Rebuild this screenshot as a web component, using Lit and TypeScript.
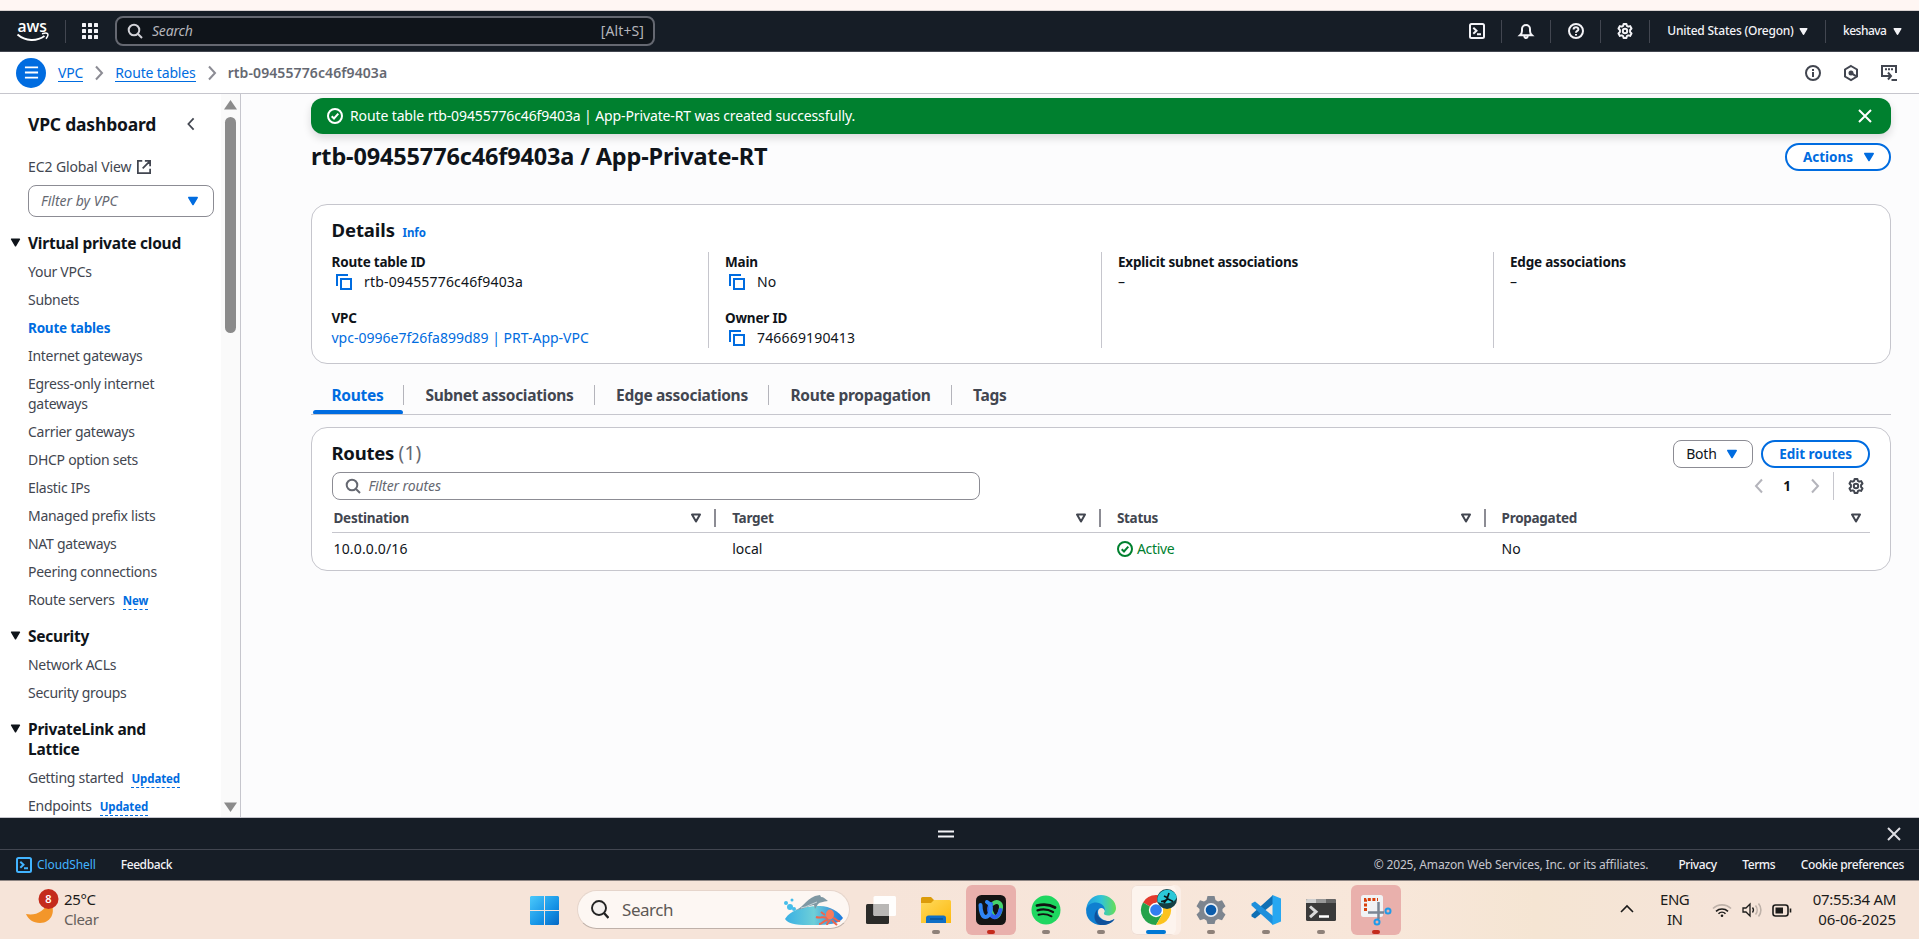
import { LitElement, html, css, svg, nothing } from 'lit';
import { customElement, property } from 'lit/decorators.js';
import { classMap } from 'lit/directives/class-map.js';

type IconName =
  | 'search' | 'shell' | 'bell' | 'help' | 'gear' | 'info' | 'hexagon' | 'shellOpen' | 'external'
  | 'copy' | 'check' | 'close' | 'left' | 'right' | 'down' | 'sort' | 'grid' | 'menu' | 'handle';

const gearPath = 'M6.6 1h2.8l.5 1.9 1.3.75 1.9-.55 1.4 2.4L13.1 7v2l1.4 1.5-1.4 2.4-1.9-.55-1.3.75L9.4 15H6.6l-.5-1.9-1.3-.75-1.9.55-1.4-2.4L2.9 9V7L1.5 5.5l1.4-2.4 1.9.55 1.3-.75z';

const glyphs: Record<IconName, unknown> = {
  search: svg`<circle cx="7" cy="7" r="5.3"/><path d="m11 11 4 4"/>`,
  shell: svg`<rect x="1" y="1" width="14" height="14" rx="1.5"/><path d="m4.3 4.8 3.2 3-3.2 3M8 11.2h4"/>`,
  bell: svg`<path d="M2 12.3h12c-1.3-1.2-2-2.6-2-4.3V6a4 4 0 0 0-8 0v2c0 1.700-.7 3.100-2 4.300zM6.300 12.500c0 3.300 3.400 3.300 3.400 0"/>`,
  help: svg`<circle cx="8" cy="8" r="7"/><path d="M5.600 6.400c0-3 4.800-3 4.800 0 0 1.600-2.400 1.500-2.400 3.300M8 11v1.600"/>`,
  gear: svg`<path d=${gearPath} stroke-linejoin="round"/><circle cx="8" cy="8" r="2.200"/>`,
  info: svg`<circle cx="8" cy="8" r="7"/><path d="M8 4v2M8 7v5"/>`,
  hexagon: svg`<path d="m8 1 6 3.500v7L8 15l-6-3.500v-7z"/><path d="m8.500 8.300 4.500 2.800"/><circle cx="8" cy="8" r="1.500" fill="currentColor"/>`,
  shellOpen: svg`<path d="M15 8V1H1v10h4"/><path d="M4 4.300h8" stroke-dasharray="2 1"/><path d="M4.500 11h5M7 7.500l3 3.500-3 3.500M10.500 15H16"/>`,
  external: svg`<path d="M6 1H1v14h14v-5M9 1h6v6M15 1 6.500 9.500"/>`,
  copy: svg`<path d="M1 12V1h11M5 5h10v10H5z"/>`,
  check: svg`<circle cx="8" cy="8" r="7"/><path d="m4.700 8.200 2.300 2.300 4.300-4.800"/>`,
  close: svg`<path d="m2 2 12 12M14 2 2 14"/>`,
  left: svg`<path d="m11 1.500-6 6.500 6 6.500"/>`,
  right: svg`<path d="m5 1.500 6 6.500-6 6.500"/>`,
  down: svg`<path d="M3.800 4.500h8.400L8 11.500z" fill="currentColor" stroke-linejoin="round" stroke-width="1.500"/>`,
  sort: svg`<path d="M4 4.500h8L8 11.500z" stroke-linejoin="round"/>`,
  grid: svg`${[0, 6, 12].map((y) => [0, 6, 12].map((x) => svg`<rect x=${x} y=${y} width="4" height="4" rx=".6" fill="currentColor" stroke="none"/>`))}`,
  menu: svg`<path d="M1 2.500h14M1 8h14M1 13.500h14"/>`,
  handle: svg`<path d="M0 5.500h16M0 10.500h16"/>`,
};

@customElement('ui-icon')
export class UiIcon extends LitElement {
  @property() name: IconName = 'search';
  static styles = css`
    :host { display: inline-flex; flex: none; width: 16px; height: 16px; }
    svg { width: 100%; height: 100%; fill: none; stroke: currentColor; stroke-width: 2; overflow: visible; }
  `;
  render() {
    return html`<svg viewBox="0 0 16 16">${glyphs[this.name]}</svg>`;
  }
}

@customElement('aws-top-nav')
export class AwsTopNav extends LitElement {
  static styles = css`
    :host { display: flex; align-items: center; box-sizing: border-box; height: 41px; background: #161d26; border-bottom: 1px solid #424650; color: #f3f3f7; font-size: 12px; }
    .logo { width: 33px; height: 22px; margin-left: 16px; overflow: visible; }
    .logo text { font: 600 17px 'Open Sans', sans-serif; fill: #fff; }
    .rule { width: 1px; height: 23px; background: #424650; flex: none; }
    .logo + .rule { margin: 0 16px; }
    .search { display: flex; align-items: center; box-sizing: border-box; width: 540px; height: 30px; margin-left: 17px; padding: 0 9px 0 10px; border: 2px solid #656871; border-radius: 8px; background: #0f141a; color: #b4b4bb; font-size: 14px; }
    .search ui-icon { color: #d2d2d8; margin-right: 9px; }
    .search em { flex: 1; letter-spacing: -.2px; }
    .search span { letter-spacing: .1px; }
    .tools { display: flex; align-items: center; margin-left: auto; gap: 16.200px; }
    .menu { display: flex; align-items: center; gap: 3px; font-weight: 500; letter-spacing: -.22px; white-space: nowrap; }
    .menu ui-icon { width: 13px; height: 13px; }
    .region { margin-left: 1px; margin-right: -1px; }
    .user { gap: 4px; margin: 0 15.500px 0 1px; letter-spacing: -.5px; }
  `;
  render() {
    return html`
      <svg class="logo" viewBox="0 0 33 22">
        <text x="1.500" y="11.500" textLength="29.500" lengthAdjust="spacingAndGlyphs">aws</text>
        <path d="M1.500 14.500c8 7 19.500 7 27 1.500" fill="none" stroke="#fff" stroke-width="1.900"/>
        <path d="M26 13.700c2.500-.7 5-.7 5.600 0s-.3 3.300-1.600 5" fill="none" stroke="#fff" stroke-width="1.500"/>
      </svg>
      <i class="rule"></i>
      <ui-icon name="grid"></ui-icon>
      <div class="search"><ui-icon name="search"></ui-icon><em>Search</em><span>[Alt+S]</span></div>
      <div class="tools">
        <ui-icon name="shell"></ui-icon><i class="rule"></i>
        <ui-icon name="bell"></ui-icon><i class="rule"></i>
        <ui-icon name="help"></ui-icon><i class="rule"></i>
        <ui-icon name="gear"></ui-icon><i class="rule"></i>
        <span class="menu region">United States (Oregon) <ui-icon name="down"></ui-icon></span><i class="rule"></i>
        <span class="menu user">keshava <ui-icon name="down"></ui-icon></span>
      </div>`;
  }
}

@customElement('aws-breadcrumbs')
export class AwsBreadcrumbs extends LitElement {
  static styles = css`
    :host { display: flex; align-items: center; box-sizing: border-box; height: 42px; padding: 0 22px 0 16px; background: #fff; border-bottom: 1px solid #c6c6cd; }
    .toggle { display: flex; align-items: center; justify-content: center; width: 30px; height: 30px; border-radius: 50%; background: #006ce0; color: #fff; margin-right: 12px; }
    .toggle ui-icon { width: 15px; height: 15px; }
    a { color: #006ce0; line-height: 17px; border-bottom: 1px solid #006ce0; padding-top: 1px; letter-spacing: -.15px; }
    .sep { width: 16px; height: 16px; margin: 0 8px; color: #8c8c94; }
    b { font-weight: 600; color: #656871; letter-spacing: .1px; flex: 1; }
    .tools { display: flex; gap: 22px; color: #424650; }
  `;
  render() {
    return html`
      <span class="toggle"><ui-icon name="menu"></ui-icon></span>
      <a>VPC</a><ui-icon class="sep" name="right"></ui-icon>
      <a>Route tables</a><ui-icon class="sep" name="right"></ui-icon>
      <b>rtb-09455776c46f9403a</b>
      <div class="tools"><ui-icon name="info"></ui-icon><ui-icon name="hexagon"></ui-icon><ui-icon name="shellOpen"></ui-icon></div>`;
  }
}

interface NavLink { label: string; tag?: string; current?: boolean }
const sections: { title: string; links: NavLink[] }[] = [
  {
    title: 'Virtual private cloud',
    links: [
      { label: 'Your VPCs' }, { label: 'Subnets' }, { label: 'Route tables', current: true }, { label: 'Internet gateways' },
      { label: 'Egress-only internet gateways' }, { label: 'Carrier gateways' }, { label: 'DHCP option sets' }, { label: 'Elastic IPs' },
      { label: 'Managed prefix lists' }, { label: 'NAT gateways' }, { label: 'Peering connections' }, { label: 'Route servers', tag: 'New' },
    ],
  },
  { title: 'Security', links: [{ label: 'Network ACLs' }, { label: 'Security groups' }] },
  { title: 'PrivateLink and Lattice', links: [{ label: 'Getting started', tag: 'Updated' }, { label: 'Endpoints', tag: 'Updated' }] },
];

@customElement('vpc-sidebar')
export class VpcSidebar extends LitElement {
  static styles = css`
    :host { display: flex; box-sizing: border-box; width: 241px; height: 723px; overflow: hidden; background: #fff; border-right: 1px solid #c6c6cd; color: #424650; }
    .body { flex: 1; min-width: 0; overflow: hidden; padding: 18px 7px 0 28px; }
    .head { display: flex; align-items: center; justify-content: space-between; height: 24px; padding-right: 15px; }
    h2 { margin: 0; font-size: 17.500px; font-weight: 700; letter-spacing: -.2px; color: #0f141a; }
    .head ui-icon { width: 16px; height: 14px; }
    .global { display: flex; align-items: center; gap: 6px; height: 20px; margin-top: 21px; letter-spacing: -.1px; }
    .global ui-icon { width: 14px; height: 14px; }
    .select { display: flex; align-items: center; justify-content: space-between; box-sizing: border-box; height: 32px; margin-top: 8px; padding: 0 12px; border: 1px solid #8c8c94; border-radius: 8px; color: #656871; font-style: italic; }
    .select ui-icon { width: 16px; height: 16px; color: #006ce0; }
    section { margin-top: 16px; }
    h3 { display: grid; grid-template-columns: 18px 1fr; margin: 0 0 9px -18px; font-size: 15.500px; font-weight: 700; line-height: 20px; letter-spacing: -.24px; color: #0f141a; }
    h3 ui-icon { width: 15px; height: 15px; margin-top: 2px; margin-left: -2.500px; }
    h3 span { max-width: 160px; }
    h3.narrow span { max-width: 130px; }
    a { display: block; max-width: 150px; line-height: 20px; margin-bottom: 8px; letter-spacing: -.28px; white-space: normal; }
    a.tagged { max-width: none; white-space: nowrap; }
    a.current { color: #006ce0; font-size: 13.500px; font-weight: 700; letter-spacing: -.22px; }
    small { display: inline-block; margin-left: 8px; font-size: 11.500px; font-weight: 700; line-height: 16px; color: #006ce0; border-bottom: 1px dashed #006ce0; letter-spacing: -.1px; }
    .track { display: flex; flex-direction: column; align-items: center; width: 19px; background: #fafafa; color: #8b8b8b; padding: 6px 0 5px; box-sizing: border-box; }
    .track svg { width: 13px; height: 10px; fill: currentColor; }
    .thumb { width: 11px; height: 216px; margin: 7px 0 auto; border-radius: 6px; background: #8b8b8b; }
  `;
  render() {
    return html`
      <div class="body">
        <div class="head"><h2>VPC dashboard</h2><ui-icon name="left"></ui-icon></div>
        <div class="global">EC2 Global View <ui-icon name="external"></ui-icon></div>
        <div class="select">Filter by VPC <ui-icon name="down"></ui-icon></div>
        ${sections.map((s) => html`
          <section>
            <h3 class=${classMap({ narrow: s.title.startsWith('Private') })}><ui-icon name="down"></ui-icon><span>${s.title}</span></h3>
            ${s.links.map((l) => html`<a class=${classMap({ current: !!l.current, tagged: !!l.tag })}>${l.label}${l.tag ? html`<small>${l.tag}</small>` : nothing}</a>`)}
          </section>`)}
      </div>
      <div class="track">
        <svg viewBox="0 0 13 10"><path d="M6.500 0 13 9.500H0z"/></svg>
        <div class="thumb"></div>
        <svg viewBox="0 0 13 10"><path d="M0 .5h13L6.500 10z"/></svg>
      </div>`;
  }
}

@customElement('route-table-page')
export class RouteTablePage extends LitElement {
  static styles = css`
    :host { display: block; flex: 1; min-width: 0; box-sizing: border-box; height: 723px; padding: 4px 28px 0 70px; background: #fcfcfd; color: #0f141a; }
    .flash { display: flex; align-items: center; box-sizing: border-box; height: 36px; padding: 0 18px 0 16px; border-radius: 12px; background: #00802f; color: #fff; box-shadow: 0 4px 8px rgba(0, 7, 22, .14); letter-spacing: -.12px; }
    .flash span { flex: 1; margin-left: 7px; }
    .title { display: flex; align-items: center; justify-content: space-between; height: 46px; margin-bottom: 24px; }
    h1 { margin: 0 0 2px; font-size: 23.500px; font-weight: 700; letter-spacing: -.16px; }
    .btn { display: flex; align-items: center; box-sizing: border-box; height: 28px; padding: 0 16px; border: 2px solid #006ce0; border-radius: 20px; background: #fff; color: #006ce0; font-size: 13.500px; font-weight: 700; letter-spacing: -.03px; }
    .title .btn { padding-right: 15px; }
    .btn ui-icon { margin-left: 8px; margin-right: -3px; }
    .card { box-sizing: border-box; border: 1px solid #c6c6cd; border-radius: 16px; background: #fff; }
    .details { height: 160px; padding: 12.500px 20px 0 19.500px; }
    h2 { margin: 0; font-size: 18.500px; line-height: 24px; font-weight: 700; letter-spacing: -.28px; }
    .details h2 { letter-spacing: -.1px; }
    h2 small { margin-left: 3px; font-size: 11.500px; font-weight: 700; color: #006ce0; letter-spacing: -.1px; }
    h2 .count { font-size: 19px; font-weight: 400; color: #656871; letter-spacing: .3px; }
    .cols { display: grid; grid-template-columns: 376.500px 393px 392px 1fr; height: 96px; margin-top: 9.500px; }
    .col { display: flex; flex-direction: column; gap: 16px; height: 96px; box-sizing: border-box; }
    .col + .col { border-left: 1px solid #c6c6cd; padding-left: 16px; }
    dl { margin: 0; line-height: 20px; }
    dt { font-size: 13.500px; font-weight: 700; letter-spacing: -.2px; }
    dd { display: flex; align-items: center; margin: 0; white-space: nowrap; }
    dd ui-icon { margin: 0 12px 0 4.500px; color: #006ce0; }
    .col + .col dd ui-icon { margin-left: 4px; margin-right: 12px; }
    dd a { color: #006ce0; letter-spacing: 0; }
    dd.id { letter-spacing: .17px; }
    .details .cols { margin-top: 9.500px; position: static; }
    .details h2 { margin-bottom: -2px; }
    .tabs { display: flex; height: 51px; box-sizing: border-box; margin-bottom: 11.500px; border-bottom: 1px solid #c6c6cd; font-size: 15.500px; font-weight: 700; color: #424650; letter-spacing: -.3px; }
    .tab { display: flex; flex-direction: column; }
    .tab span { display: flex; align-items: center; height: 20px; margin-top: 21px; padding: 0 20px 0 21.500px; border-right: 1px solid #b4b4bb; white-space: nowrap; }
    .tab:first-child span { padding: 0 19.500px 0 20.500px; }
    .tab:last-child span { border: 0; }
    .tab.on { color: #006ce0; }
    .tab.on::after { content: ''; height: 4px; margin: 5px 1px 0 2px; border-radius: 4px 4px 2px 2px; background: #006ce0; }
    .routes { height: 144px; padding: 12px 20px 0 19.500px; }
    .row { display: flex; align-items: center; justify-content: space-between; height: 28px; }
    .row h2 { margin-bottom: 2px; }
    .actions { display: flex; gap: 8px; }
    .both { display: flex; align-items: center; justify-content: space-between; box-sizing: border-box; width: 80px; height: 28px; padding: 0 12px; border: 1px solid #8c8c94; border-radius: 8px; background: #fff; letter-spacing: -.2px; }
    .both ui-icon { color: #006ce0; }
    .filter { display: flex; align-items: center; box-sizing: border-box; width: 648px; height: 28px; padding-left: 12px; border: 1px solid #8c8c94; border-radius: 8px; color: #656871; font-style: italic; letter-spacing: -.1px; }
    .filter ui-icon { margin-right: 8px; }
    .tools { margin-top: 4px; }
    .pager { display: flex; align-items: center; height: 28px; color: #b4b4bb; }
    .pager b { width: 40px; text-align: center; color: #0f141a; font-size: 13.500px; }
    .pager i { width: 1px; height: 28px; margin: 0 14px 0 10px; background: #c6c6cd; }
    .pager .gear { margin-right: 6px; color: #424650; }
    .table { display: grid; grid-template-columns: 384.700px 384.700px 384.700px 1fr; }
    .th { display: flex; align-items: center; justify-content: space-between; box-sizing: border-box; height: 33px; padding: 4px 0 0 16px; border-bottom: 1px solid #c6c6cd; color: #424650; font-size: 13.500px; font-weight: 700; letter-spacing: -.28px; }
    .th:first-child, .td.first { padding-left: 2px; }
    .th span { flex: 1; }
    .th ui-icon { margin-right: 10px; }
    .th::after { content: ''; width: 2px; height: 18px; background: #8c8c94; }
    .th.last::after { display: none; }
    .th.last ui-icon { margin-right: 6px; }
    .td { display: flex; align-items: center; gap: 4px; height: 33px; padding-left: 16px; }
    .td.first { letter-spacing: .15px; }
    .ok { color: #00802f; letter-spacing: -.3px; }
  `;
  private pair(label: string, value: unknown, cls = '') {
    return html`<dl><dt>${label}</dt><dd class=${cls}>${value}</dd></dl>`;
  }
  render() {
    const copy = html`<ui-icon name="copy"></ui-icon>`;
    const heads = ['Destination', 'Target', 'Status', 'Propagated'];
    const tabs = ['Routes', 'Subnet associations', 'Edge associations', 'Route propagation', 'Tags'];
    return html`
      <div class="flash"><ui-icon name="check"></ui-icon><span>Route table rtb-09455776c46f9403a | App-Private-RT was created successfully.</span><ui-icon name="close"></ui-icon></div>
      <div class="title"><h1>rtb-09455776c46f9403a / App-Private-RT</h1><span class="btn">Actions <ui-icon name="down"></ui-icon></span></div>
      <div class="card details">
        <h2>Details <small>Info</small></h2>
        <div class="cols">
          <div class="col">${this.pair('Route table ID', html`${copy}rtb-09455776c46f9403a`, 'id')}${this.pair('VPC', html`<a>vpc-0996e7f26fa899d89 | PRT-App-VPC</a>`)}</div>
          <div class="col">${this.pair('Main', html`${copy}No`)}${this.pair('Owner ID', html`${copy}746669190413`, 'id')}</div>
          <div class="col">${this.pair('Explicit subnet associations', '–')}</div>
          <div class="col">${this.pair('Edge associations', '–')}</div>
        </div>
      </div>
      <div class="tabs">${tabs.map((t, i) => html`<div class=${classMap({ tab: true, on: i === 0 })}><span>${t}</span></div>`)}</div>
      <div class="card routes">
        <div class="row">
          <h2>Routes <span class="count">(1)</span></h2>
          <div class="actions"><span class="both">Both <ui-icon name="down"></ui-icon></span><span class="btn">Edit routes</span></div>
        </div>
        <div class="row tools">
          <div class="filter"><ui-icon name="search"></ui-icon>Filter routes</div>
          <div class="pager"><ui-icon name="left"></ui-icon><b>1</b><ui-icon name="right"></ui-icon><i></i><ui-icon class="gear" name="gear"></ui-icon></div>
        </div>
        <div class="table">
          ${heads.map((h, i) => html`<div class=${classMap({ th: true, last: i === 3 })}><span>${h}</span><ui-icon name="sort"></ui-icon></div>`)}
          <div class="td first">10.0.0.0/16</div><div class="td">local</div>
          <div class="td ok"><ui-icon name="check"></ui-icon>Active</div><div class="td">No</div>
        </div>
      </div>`;
  }
}

@customElement('shell-footer')
export class ShellFooter extends LitElement {
  static styles = css`
    :host { display: block; background: #161d26; color: #f3f3f7; font-size: 12px; border-top: 1px solid #c6c6cd; }
    .panel { display: grid; grid-template-columns: 1fr 16px 1fr; align-items: center; height: 31px; box-sizing: border-box; }
    .panel .x { justify-self: end; margin-right: 17px; color: #dedee3; }
    .panel .h { margin-left: -14px; }
    .bar { display: flex; align-items: center; box-sizing: border-box; height: 32px; border-top: 1px solid #424650; border-bottom: 1px solid #8d8583; padding: 0 15px 0 16px; white-space: nowrap; }
    .shell { display: flex; align-items: center; gap: 5px; color: #42b4ff; margin-right: 25px; letter-spacing: -.1px; }
    .feedback { flex: 1; }
    .copyright { color: #c6c6cd; letter-spacing: -.15px; margin-right: 30px; }
    .legal { display: flex; gap: 25.500px; }
    .legal, .feedback { font-weight: 500; letter-spacing: -.4px; }
  `;
  render() {
    return html`
      <div class="panel"><i></i><ui-icon class="h" name="handle"></ui-icon><ui-icon class="x" name="close"></ui-icon></div>
      <div class="bar">
        <span class="shell"><ui-icon name="shell"></ui-icon>CloudShell</span>
        <span class="feedback">Feedback</span>
        <span class="copyright">© 2025, Amazon Web Services, Inc. or its affiliates.</span>
        <span class="legal"><span>Privacy</span><span>Terms</span><span>Cookie preferences</span></span>
      </div>`;
  }
}

const apps: { id: string; state: 'idle' | 'plain' | 'alert' | 'active'; art: unknown }[] = [
  { id: 'views', state: 'plain', art: svg`<rect x="0" y="9" width="23" height="20" rx="1.500" fill="#2b2b29"/><rect x="7.500" y="1" width="22.500" height="20" rx="1.500" fill="#fff" opacity=".95"/><path d="M7.500 9H23v12H9a1.500 1.500 0 0 1-1.500-1.500z" fill="#b9b7b5"/>` },
  { id: 'files', state: 'idle', art: svg`<path d="M0 3.500A1.500 1.500 0 0 1 1.500 2H10l3 3v6H0z" fill="#dc9c0a"/><path d="M0 8h10l3-3h15.500A1.500 1.500 0 0 1 30 6.500V28H0z" fill="url(#gFolder)"/><path d="M5 28v-5a2.500 2.500 0 0 1 2.500-2.500h15A2.500 2.500 0 0 1 25 23v5z" fill="#0f6fc6"/><path d="M9 24h13" stroke="#07427c"/>` },
  { id: 'webex', state: 'alert', art: svg`<rect width="30" height="30" rx="5.500" fill="#141414"/><g fill="none" stroke-width="4" stroke-linecap="round"><path d="M17 8.500c4-3 8.500-1 8 4-.5 6-3 9.500-5.500 9.500-2 0-3.500-3-5-7" stroke="#45d36c"/><path d="M15 9c-2 2.500-2.500 6-1 9 1.500 3.500 3.500 4.500 5.500 4 2.500-.5 4-3.500 5-7" stroke="#2b62ee"/><path d="M11 7c3 1.500 4.500 5 3.500 9-1 4-3 6-5 6-3 0-5-5-5-12" stroke="#2f86f6"/></g>` },
  { id: 'music', state: 'idle', art: svg`<circle cx="15" cy="15" r="14.500" fill="#1fd760"/><g fill="none" stroke="#111" stroke-linecap="round"><path d="M6 10.500c6-1.500 13-1 18 2" stroke-width="2.800"/><path d="M6.500 15.300c5.500-1.500 11-.8 15.500 1.700" stroke-width="2.300"/><path d="M7.500 19.700c4.500-1 9-.6 13 1.600" stroke-width="1.900"/></g>` },
  { id: 'edge', state: 'idle', art: svg`<path d="M15 0C23 0 30 6 30 13c0 5-4 7.500-8 7.500-3 0-4.500-1-4-2.500 2.500-3-1-8-6-8S2 13 .2 16C0 7 6 0 15 0z" fill="url(#gEdge)"/><path d="M.2 15C1 9.500 6 7.500 10 7.500c5 0 9.500 4 9 8.500-1-3-4-4-6-2-3 4 1 11 8 12 3 .3 5-.5 7.500-2C26 28 21 30 15 30 6 30-.5 23 .2 15z" fill="#0f7fd0"/><path d="M12 14c-3 5 1 11 9 12 3 .3 5-.7 7.500-2C26 28 21 30 16 30c-8 0-10-11-4-16z" fill="#10519b"/>` },
  { id: 'browser', state: 'active', art: svg`<circle cx="15" cy="15" r="15" fill="#fff"/><path d="M15 15 2 7.500A15 15 0 0 1 28 7.500H15z" fill="#e33b2e"/><path d="M2 7.500A15 15 0 0 0 15 30l6.500-11.200L15 15z" fill="#25a24a"/><path d="M28 7.500A15 15 0 0 1 15 30l7-12V7.500z" fill="#fcc31e"/><circle cx="15" cy="15" r="7.200" fill="#fff"/><circle cx="15" cy="15" r="5.800" fill="#317ef0"/><circle cx="26" cy="4" r="10" fill="#123f45"/><path d="M16.500 7a10 10 0 0 1 19-6C36.500 8 23 10 16.500 7z" fill="#2bc8d8"/><path d="M20 6.500c3 0 5-1 7-2.500l5 2.500M23 1l4 2M28-2l-2 6-3 4" stroke="#0b1517" stroke-width="1.700" fill="none"/>` },
  { id: 'settings', state: 'idle', art: svg`<path d="M11.500 1h7l1 4 2.500 1.500 4-1.200 3.500 6L26.500 14v2.500l3 3-3.500 5.700-4-1.200-2.500 1.500-1 3.500h-7l-1-3.500L8 24l-4 1.200L.5 19.500l3-3V14l-3-2.700 3.500-6 4 1.200L10.500 5z" fill="#7d858f"/><circle cx="15" cy="15" r="7" fill="#e9edf2"/><circle cx="15" cy="15" r="5.300" fill="#0b5cab"/>` },
  { id: 'code', state: 'idle', art: svg`<path d="M22 0v9L4 23.500l-3.500-2v-2z" fill="#0f6fb4"/><path d="M22 30v-9L4 6.500l-3.500 2v2z" fill="#1d8fdc"/><path d="M21.500 0 30 3.500v23L21.500 30z" fill="#27a7f1"/>` },
  { id: 'terminal', state: 'idle', art: svg`<rect y="4" width="30" height="22" rx="1.500" fill="#3a3a3a"/><path d="M0 8V5.500A1.500 1.500 0 0 1 1.500 4H10v4z" fill="#d0d0d0"/><path d="M10 4h10v4H10z" fill="#999"/><path d="M20 4h8.500A1.500 1.500 0 0 1 30 5.500V8H20z" fill="#666"/><path d="m4 11.500 6 5.300-6 5.300" fill="none" stroke="#d9d9d9" stroke-width="3"/><path d="M13 21.500h10" stroke="#fff" stroke-width="2.500"/>` },
  { id: 'snip', state: 'alert', art: svg`<rect width="22" height="22" rx="2.500" fill="#f1f3f5"/><path d="M4.500 16V4.500H17" fill="none" stroke="#d9400b" stroke-width="3" stroke-dasharray="3 1.600"/><path d="M17.500 7v17M7 17.500h16" stroke="#7b8794" stroke-width="2.500"/><circle cx="16" cy="27" r="2.500" fill="none" stroke="#1f9bea" stroke-width="2"/><circle cx="27" cy="16" r="2.500" fill="none" stroke="#1f9bea" stroke-width="2"/>` },
];

@customElement('desktop-taskbar')
export class DesktopTaskbar extends LitElement {
  static styles = css`
    :host { display: grid; grid-template-columns: 530px 1fr auto; height: 58px; color: #1c1b1a; font: 15px/20px 'Noto Sans', sans-serif; background: linear-gradient(90deg, #f6e4d9 0 45%, #f8e7da 72%, #f5e5d3 80%, #f5e4d9 90%); }
    .weather { display: flex; padding: 8px 0 0 24px; }
    .weather svg { width: 36px; height: 36px; margin: 0 4px 0 0; }
    .weather svg text { font: 600 11px 'Noto Sans', sans-serif; fill: #fff; text-anchor: middle; }
    .weather div { letter-spacing: -.35px; }
    .weather .muted { color: #66605c; letter-spacing: -.4px; }
    .muted { color: #5d5955; }
    .center { display: flex; align-items: flex-start; }
    .win { width: 29px; height: 29px; margin: 15px 18px 0 0; }
    .pill { display: flex; align-items: center; box-sizing: border-box; width: 273px; height: 39px; margin-top: 9px; padding: 0 5px 0 13px; border: 1px solid #e6d5cb; border-bottom-color: #bfb1a9; border-radius: 20px; background: #fdf7f3; font-size: 17px; letter-spacing: -.45px; color: #5d5955; }
    .pill .mag { width: 18px; height: 19px; color: #222; margin-right: 13px; }
    .pill span { flex: 1; }
    .pill .sea { width: 61px; height: 32px; }
    .apps { display: flex; gap: 5px; margin: 4px 0 0 6px; }
    .app { display: flex; flex-direction: column; align-items: center; justify-content: space-between; box-sizing: border-box; width: 50px; height: 50px; padding: 10px 0 1px; border-radius: 6px; }
    .app svg { width: 30px; height: 30px; overflow: visible; }
    .app::after { content: ''; width: 8px; height: 4px; border-radius: 2px; background: #8e8179; }
    .plain::after { visibility: hidden; }
    .alert { background: #e9b0ac; }
    .alert::after { background: #c42b1c; }
    .active { background: #fdf4ee; box-shadow: inset -5px 0 0 #fbeee6, inset 0 0 0 1px #f0dfd5; }
    .active::after { width: 20px; background: #0078d4; }
    .tray { display: flex; align-items: flex-start; padding: 8px 23px 0 0; }
    .tray svg { fill: none; stroke: #1c1b1a; stroke-width: 1.600; }
    .up { width: 14px; height: 14px; margin: 13px 26px 0 0; }
    .lang { width: 30px; text-align: center; letter-spacing: -.5px; margin-right: 22px; }
    .net { width: 82px; height: 20px; margin: 11px 19px 0 0; overflow: visible; }
    .clock { text-align: right; letter-spacing: -.3px; }
    .clock .date { letter-spacing: -.05px; }
  `;
  render() {
    return html`
      <div class="weather">
        <svg viewBox="0 0 36 36">
          <path d="M2 25c9 2 19-2 23-14 8 10 3 23-9 23-7 0-12-4-14-9z" fill="#f3962a"/>
          <circle cx="24.500" cy="10" r="10" fill="#c42b1c"/><text x="24.500" y="14">8</text>
        </svg>
        <div>25°C<br><span class="muted">Clear</span></div>
      </div>
      <div class="center">
        <svg class="win" viewBox="0 0 29 29">
          <defs>
            <linearGradient id="gWin" gradientUnits="userSpaceOnUse" x1="0" y1="0" x2="29" y2="29"><stop offset="0" stop-color="#4cc9fb"/><stop offset=".6" stop-color="#1593e6"/><stop offset="1" stop-color="#0668c4"/></linearGradient>
          </defs>
          <path d="M1 0h13v14H0V1zM15 0h13l1 1v13H15zM0 15h14v14H1l-1-1zM15 15h14v13l-1 1H15z" fill="url(#gWin)"/>
        </svg>
        <div class="pill">
          <svg class="mag" viewBox="0 0 18 19" fill="none" stroke="currentColor"><circle cx="8" cy="8" r="7" stroke-width="1.900" fill="#f4f0ee"/><path d="m13 13 4.500 5" stroke-width="2.400"/></svg>
          <span>Search</span>
          <svg class="sea" viewBox="0 0 61 32">
            <defs><linearGradient id="gSea"><stop offset="0" stop-color="#38b0e4"/><stop offset=".5" stop-color="#6fcfd8"/><stop offset="1" stop-color="#1b78dd"/></linearGradient></defs>
            <path d="M2 25c6-10 22-13 35-13 10 0 19 6 23 12-4 6-14 7-30 7-14 0-24 0-28-6z" fill="url(#gSea)"/>
            <path d="M12 16c7-1 10-10 20-14l5-1 1 2c3 0 4 2 7 4-5 1-8 1-10 3l-3 5-1-4c-7 1-12 5-19 5z" fill="#7f98a3"/>
            <path d="M18 14c6-1 10-4 16-6" stroke="#c9d5da" fill="none"/>
            <g fill="#45bdea"><circle cx="3" cy="9" r="2"/><circle cx="9" cy="6" r="1.500"/><circle cx="7" cy="13" r="3"/><circle cx="11" cy="15" r="2"/></g>
            <g fill="none" stroke="#f0644c" stroke-width="2"><path d="M46 25c-5-4-8 0-13-2M45 26c-5 0-5 4-9 4M47 26c-1 2-3 3-3 5M49 26c1 2 3 3 5 5M50 24c3 0 4 4 7 3M42 21l-4-3"/></g>
            <ellipse cx="47" cy="20.500" rx="4" ry="5" fill="#f77b5c"/>
          </svg>
        </div>
        <div class="apps">
          ${apps.map((a) => html`<div class="app ${a.state}"><svg viewBox="0 0 30 30">
            <defs>
              <linearGradient id="gFolder" x2="1" y2="1"><stop offset="0" stop-color="#ffda5c"/><stop offset="1" stop-color="#fdb90f"/></linearGradient>
              <linearGradient id="gEdge"><stop offset="0" stop-color="#1f9be0"/><stop offset=".5" stop-color="#31c3d8"/><stop offset="1" stop-color="#66df55"/></linearGradient>
            </defs>${a.art}</svg></div>`)}
        </div>
      </div>
      <div class="tray">
        <svg class="up" viewBox="0 0 14 14"><path d="m1 10 6-6 6 6"/></svg>
        <div class="lang">ENG<br>IN</div>
        <svg class="net" viewBox="0 0 82 20">
          <path d="M1 8.500a13 13 0 0 1 18 0" opacity=".25"/><path d="M4 11.300a9 9 0 0 1 12 0M6.500 13.700a5 5 0 0 1 7 0"/><circle cx="10" cy="15.800" r="1.300" fill="#1c1b1a" stroke="none"/>
          <path d="M31 8h3l4-4v12l-4-4h-3z" stroke-width="1.300"/><path d="M40.500 7.500a4 4 0 0 1 0 5" stroke-width="1.300"/><path d="M43.500 5.500a7 7 0 0 1 0 9M46.500 3.500a10 10 0 0 1 0 13" opacity=".25"/>
          <rect x="61" y="5" width="15" height="11" rx="2.500"/><rect x="63.500" y="7.500" width="7.500" height="6" fill="#1c1b1a" stroke="none"/><path d="M78.500 8.500v4"/>
        </svg>
        <div class="clock">07:55:34 AM<br><span class="date">06-06-2025</span></div>
      </div>`;
  }
}

@customElement('app-root')
export class AppRoot extends LitElement {
  static styles = css`
    :host { display: block; height: 939px; overflow: hidden; font: 14px/20px 'Noto Sans', 'Open Sans', sans-serif; }
    .strip { box-sizing: border-box; height: 11px; background: #fff6f3; border-bottom: 1px solid #d9d2d1; }
    .main { display: flex; height: 723px; }
  `;
  render() {
    return html`
      <div class="strip"></div>
      <aws-top-nav></aws-top-nav>
      <aws-breadcrumbs></aws-breadcrumbs>
      <div class="main"><vpc-sidebar></vpc-sidebar><route-table-page></route-table-page></div>
      <shell-footer></shell-footer>
      <desktop-taskbar></desktop-taskbar>`;
  }
}
